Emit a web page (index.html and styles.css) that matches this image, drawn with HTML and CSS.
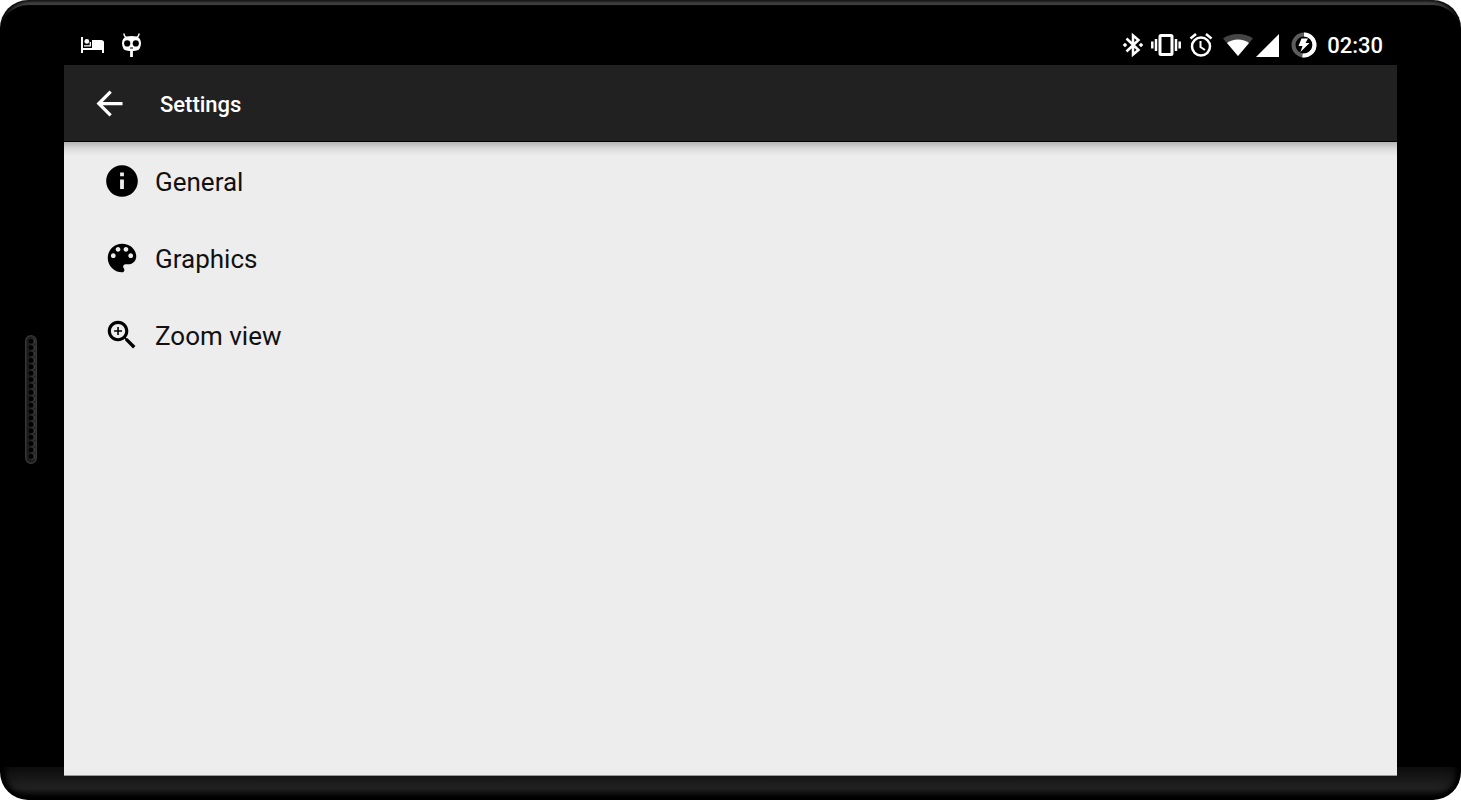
FILE: index.html
```html
<!DOCTYPE html>
<html lang="en">
    <head>
        <meta charset="utf-8" />
        <title>Settings</title>
        <meta name="viewport" content="width=device-width, initial-scale=1" />
        <link rel="stylesheet" href="styles.css">
    </head>
    <body>
        <div class="device">
            <div class="side">
                <!-- speaker grille -->
                <svg class="speaker" viewBox="0 0 12 129">
                    <defs>
                        <pattern id="holes" x="0" y="3" width="12" height="6.4" patternUnits="userSpaceOnUse">
                            <circle cx="7.2" cy="3.2" r="3" fill="#3c3c3c" />
                            <circle cx="6.2" cy="3.2" r="2.5" fill="#000" />
                        </pattern>
                    </defs>
                    <rect x="0.75" y="0.75" width="10.5" height="127.5" rx="5.2" fill="#1b1b1b" stroke="#363636" stroke-width="1.5" />
                    <rect x="2" y="3" width="9" height="122" rx="4" fill="url(#holes)" />
                </svg>
            </div>
            <div class="screen">
                <div class="status">
                    <svg class="bed" viewBox="0 0 23 16">
                        <path fill="#fff" d="M0 0h2v11h19v-7q2 0 2 2v10h-2v-3H2v3H0z" />
                        <path fill="#fff" d="M11 3h9q3 0 3 3v5H11z" />
                        <circle cx="5.8" cy="4.4" r="2.4" fill="#fff" />
                        <path fill="none" stroke="#fff" stroke-width="1.3" d="M3 8.8h6.3V5" />
                    </svg>
                    <svg class="cid" viewBox="0 0 20 24">
                        <path fill="none" stroke="#fff" stroke-width="1.5" stroke-linecap="round" d="M4.5 4.5Q2.5 3 2.5 1M15.5 4.5Q17.5 3 17.5 1" />
                        <path fill="#fff" d="M5 3.5Q10 2.5 15 3.5Q19.5 5 19.5 10.5Q19 17 15 17.5Q10 18.5 5 17.5Q1 17 0.5 10.5Q0.5 5 5 3.5z" />
                        <circle cx="5.7" cy="10.4" r="3.1" />
                        <circle cx="14.3" cy="10.4" r="3.1" />
                        <path stroke="#000" d="M8.5 15h3" />
                        <path stroke="#fff" stroke-width="2.8" d="M10 17.5V24" />
                    </svg>
                    <div class="tray">
                        <svg class="bt" viewBox="0 0 20 24">
                            <path fill="none" stroke="#fff" stroke-width="2.5" d="M3.500 5.500L15.500 17L10 21.500V2.500L15.500 7L3.500 18.500" />
                            <path fill="#fff" d="M2 9.700l2.300 2.300-2.300 2.300L-.3 12zM18 9.700l2.300 2.300-2.300 2.300-2.300-2.300z" />
                        </svg>
                        <svg class="vib" viewBox="0 0 30 24">
                            <rect x="9" y="2.500" width="12" height="19" rx="1" fill="none" stroke="#fff" stroke-width="3" />
                            <path fill="none" stroke="#fff" stroke-width="2.500" d="M5 6v12M25 6v12M1.300 8.500v7M28.700 8.500v7" />
                        </svg>
                        <svg class="alarm" viewBox="0 0 24 24">
                            <circle cx="12" cy="13.500" r="9" fill="none" stroke="#fff" stroke-width="2.500" />
                            <path fill="none" stroke="#fff" stroke-width="2.500" d="M1.500 5.500L7 1M22.500 5.500L17 1" />
                            <path fill="none" stroke="#fff" stroke-width="2" d="M11.500 8v6l4.500 3" />
                        </svg>
                        <svg class="wifi" viewBox="0 0 30 22">
                            <path fill="#454545" d="M15 22L0 4.500Q6 0 15 0T30 4.500z" />
                            <path fill="#fff" d="M15 22L4 9Q8.500 5.500 15 5.500T26 9z" />
                        </svg>
                        <svg class="signal" viewBox="0 0 23 23">
                            <path fill="#fff" d="M0 23L23 0v23z" />
                        </svg>
                        <svg class="battery" viewBox="0 0 26 26">
                            <circle cx="13" cy="13" r="10.500" fill="none" stroke="#5c5c5c" stroke-width="4" />
                            <path fill="none" stroke="#fff" stroke-width="4" d="M13 2.500A10.500 10.500 0 1 1 11.500 23.400" />
                            <path fill="#fff" d="M10.500 6.500H17L14.500 11H18.500L9.500 20L11.500 14H7.500z" />
                        </svg>
                        <span class="clock">02:30</span>
                    </div>
                </div>
                <header class="appbar">
                    <button class="back" type="button" aria-label="Back">
                        <svg viewBox="0 0 24 24">
                            <path fill="#fff" d="M20 11H7.830l5.590-5.590L12 4l-8 8 8 8 1.410-1.410L7.830 13H20v-2z" />
                        </svg>
                    </button>
                    <h1 class="title">Settings</h1>
                </header>
                <nav class="list">
                    <a class="item" href="#general">
                        <svg viewBox="0 0 24 24">
                            <path d="M12 2C6.480 2 2 6.480 2 12s4.480 10 10 10 10-4.480 10-10S17.520 2 12 2zm1.200 15h-2.400v-6h2.400v6zm0-8h-2.400V6.700h2.400V9z" />
                        </svg>
                        <span class="label">General</span>
                    </a>
                    <a class="item" href="#graphics">
                        <svg viewBox="0 0 24 24">
                            <path d="M12 3c-4.970 0-9 4.030-9 9s4.030 9 9 9c.83 0 1.500-.67 1.500-1.500 0-.39-.15-.74-.39-1.010-.23-.26-.38-.61-.38-.99 0-.83.67-1.500 1.500-1.500H16c2.760 0 5-2.240 5-5 0-4.420-4.030-8-9-8zm-5.500 9c-.83 0-1.500-.67-1.500-1.500S5.670 9 6.500 9 8 9.670 8 10.500 7.330 12 6.500 12zm3-4C8.670 8 8 7.330 8 6.500S8.670 5 9.500 5s1.500.67 1.500 1.500S10.330 8 9.500 8zm5 0c-.83 0-1.500-.67-1.500-1.500S13.670 5 14.500 5s1.500.67 1.500 1.500S15.330 8 14.500 8zm3 4c-.83 0-1.500-.67-1.500-1.500S16.670 9 17.500 9s1.500.67 1.500 1.500-.67 1.500-1.500 1.500z" />
                        </svg>
                        <span class="label">Graphics</span>
                    </a>
                    <a class="item" href="#zoom">
                        <svg viewBox="0 0 24 24">
                            <path d="M15.500 14h-.79l-.28-.27C15.410 12.590 16 11.110 16 9.500 16 5.910 13.090 3 9.500 3S3 5.910 3 9.500 5.910 16 9.500 16c1.610 0 3.090-.59 4.230-1.570l.27.28v.79l5 4.990L20.490 19l-4.990-5zm-6 0C7.010 14 5 11.990 5 9.500S7.010 5 9.500 5 14 7.010 14 9.500 11.990 14 9.500 14zM12 9h-2V7H9v2H7v1h2v2h1v-2h2z" />
                        </svg>
                        <span class="label">Zoom view</span>
                    </a>
                </nav>
            </div>
        </div>
    </body>
</html>
```

FILE: styles.css
```css
* {
    box-sizing: border-box;
}
body {
    margin: 0;
    background: #fff;
    font-family: Roboto, "Liberation Sans", sans-serif;
}
svg {
    display: block;
    flex: none;
}
.device {
    display: grid;
    grid-template-columns: 64px 1fr 64px;
    min-height: 100vh;
    padding: 25px 0 24px;
    border-radius: 28px;
    background: #000 linear-gradient(#0c0c0c, #222 65%, #000) bottom / 100% 33px no-repeat;
    box-shadow: inset 4px 0 4px #000, inset -4px 0 4px #000, inset 0 5px 1px #464646, inset 0 0 10px 3px #000;
}
.side {
    display: flex;
    align-items: center;
    justify-content: center;
    padding: 0 2px 2px 0;
}
.speaker {
    width: 12px;
    height: 129px;
}
.screen {
    display: flex;
    flex-direction: column;
    min-width: 0;
}
.status {
    display: flex;
    align-items: center;
    gap: 17px;
    height: 40px;
    padding: 0 14px 0 17px;
    background: #000;
}
.bed {
    width: 23px;
    height: 16px;
}
.cid {
    width: 21px;
    height: 24px;
}
.tray {
    display: flex;
    align-items: center;
    gap: 8px;
    margin-left: auto;
}
.bt {
    width: 20px;
    height: 24px;
    overflow: visible;
}
.vib {
    width: 30px;
    height: 24px;
}
.alarm {
    width: 24px;
    height: 24px;
}
.wifi {
    width: 30px;
    height: 22px;
    margin-left: 2px;
}
.signal {
    width: 23px;
    height: 23px;
    margin-left: -5px;
}
.battery {
    width: 26px;
    height: 26px;
    margin-left: 4px;
}
.clock {
    margin-left: 2px;
    color: #fff;
    font-size: 22px;
    font-weight: 500;
}
.appbar {
    display: flex;
    align-items: center;
    gap: 31px;
    height: 77px;
    padding: 0 26px;
    background: #212121;
    border-bottom: 1px solid #000;
}
.back {
    padding: 0;
    border: 0;
    background: none;
    cursor: pointer;
}
.back svg {
    width: 39px;
    height: 39px;
}
.title {
    margin: 0;
    padding-top: 2px;
    color: #fff;
    font-size: 22px;
    font-weight: 500;
}
.list {
    flex: 1;
    background: #ededed linear-gradient(#b4b4b4, #dcdcdc 50%, #ededed) top / 100% 14px no-repeat;
    border-bottom: 1px solid #999;
}
.item {
    display: flex;
    align-items: center;
    gap: 14px;
    height: 77px;
    padding: 0 39px;
    color: #111;
    font-size: 26px;
    text-decoration: none;
}
.item svg {
    width: 38px;
    height: 38px;
    fill: #000;
}
.label {
    padding-top: 2px;
}
```
